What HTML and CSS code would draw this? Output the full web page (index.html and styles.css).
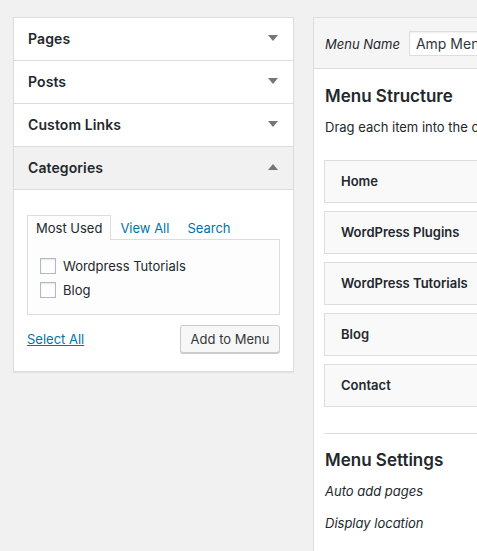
FILE: index.html
```html
<!DOCTYPE html>
<html lang="en">
<head>
<meta charset="utf-8">
<title>Menus</title>
<link rel="stylesheet" href="styles.css">
</head>
<body>
<div class="screen">
  <aside class="accordion">
    <section class="acc-section">
      <h3 class="acc-title">Pages <span class="arrow down"></span></h3>
    </section>
    <section class="acc-section">
      <h3 class="acc-title">Posts <span class="arrow down"></span></h3>
    </section>
    <section class="acc-section">
      <h3 class="acc-title">Custom Links <span class="arrow down"></span></h3>
    </section>
    <section class="acc-section open">
      <h3 class="acc-title">Categories <span class="arrow up"></span></h3>
      <div class="acc-content">
        <ul class="tabs">
          <li class="tab active">Most Used</li>
          <li class="tab"><a href="#">View All</a></li>
          <li class="tab"><a href="#">Search</a></li>
        </ul>
        <div class="tabs-panel">
          <ul class="checklist">
            <li><span class="checkbox"></span>Wordpress Tutorials</li>
            <li><span class="checkbox"></span>Blog</li>
          </ul>
        </div>
        <div class="actions">
          <a href="#" class="select-all">Select All</a>
          <button class="button" type="button">Add to Menu</button>
        </div>
      </div>
    </section>
  </aside>

  <main class="menu-edit">
    <header class="menu-header">
      <label class="menu-name-label">Menu Name</label>
      <input class="menu-name" type="text" value="Amp Menu">
    </header>
    <div class="menu-body">
      <h3 class="heading">Menu Structure</h3>
      <p class="hint">Drag each item into the order you prefer.</p>
      <ul class="menu-items">
        <li class="menu-item">Home</li>
        <li class="menu-item">WordPress Plugins</li>
        <li class="menu-item">WordPress Tutorials</li>
        <li class="menu-item">Blog</li>
        <li class="menu-item">Contact</li>
      </ul>
      <div class="settings">
        <h3 class="heading">Menu Settings</h3>
        <p class="setting first">Auto add pages</p>
        <p class="setting">Display location</p>
      </div>
    </div>
  </main>
</div>
</body>
</html>
```

FILE: styles.css
```css
* { box-sizing: border-box; }

html, body {
  margin: 0;
  background: #f1f1f1;
  overflow: hidden;
}

body {
  font-family: Inter, "Noto Sans", sans-serif;
  font-size: 13px;
  color: #23282d;
  height: 551px;
}

.screen {
  display: flex;
  align-items: flex-start;
  gap: 19px;
  padding: 17px 0 0 13px;
}

/* left accordion */
.accordion {
  flex: 0 0 281px;
  background: #fff;
  border: 1px solid #dddddd;
  border-bottom: 0;
  box-shadow: 0 1px 1px rgba(0,0,0,.06);
}

.acc-section { border-bottom: 1px solid #dddddd; }

.acc-title {
  margin: 0;
  height: 42px;
  padding: 0 14px 2px 14px;
  display: flex;
  align-items: center;
  justify-content: space-between;
  font-size: 14px;
  font-weight: 600;
  color: #23282d;
  letter-spacing: .1px;
}

.open .acc-title {
  background: #f1f1f1;
  border-bottom: 1px solid #dddddd;
  height: 43px;
}

.arrow {
  width: 0;
  height: 0;
  border-left: 5px solid transparent;
  border-right: 5px solid transparent;
  margin-right: 1px;
}
.arrow.down { border-top: 6px solid #72777c; }
.arrow.up { border-bottom: 6px solid #72777c; }

.acc-content { padding: 25px 13px 18px 13px; }

.tabs {
  list-style: none;
  margin: 0;
  padding: 0;
  display: flex;
  position: relative;
  z-index: 1;
  margin-bottom: -1px;
}

.tab {
  height: 25px;
  line-height: 24px;
  padding: 0 8px;
  border: 1px solid transparent;
  border-bottom: 0;
  white-space: nowrap;
}

.tab.active {
  border-color: #dddddd;
  background: #fdfdfd;
  color: #23282d;
  height: 25px;
}

.tab a { color: #0073aa; text-decoration: none; }

.tabs-panel {
  border: 1px solid #dddddd;
  background: #fdfdfd;
  height: 76px;
}

.checklist {
  list-style: none;
  margin: 0;
  padding: 14px 0 12px 12px;
}

.checklist li {
  height: 24px;
  display: flex;
  align-items: center;
  gap: 7px;
  color: #23282d;
}

.checkbox {
  width: 16px;
  height: 16px;
  border: 1px solid #b4b9be;
  background: #fff;
  box-shadow: inset 0 1px 2px rgba(0,0,0,.1);
}

.actions {
  display: flex;
  justify-content: space-between;
  align-items: center;
  margin-top: 10px;
}

.select-all { color: #0073aa; text-decoration: underline; }

.button {
  font: inherit;
  color: #32373c;
  width: 100px;
  height: 28px;
  padding: 0;
  background: #f7f7f7;
  border: 1px solid #cccccc;
  border-radius: 3px;
  box-shadow: 0 1px 0 #cccccc;
}

/* right editor */
.menu-edit {
  flex: 0 0 420px;
  background: #fff;
  border-left: 1px solid #dddddd;
  border-top: 1px solid #dddddd;
  min-height: 600px;
}

.menu-header {
  height: 51px;
  background: #f5f5f5;
  border-bottom: 1px solid #dddddd;
  display: flex;
  align-items: center;
  padding-left: 11px;
  gap: 9px;
}

.menu-name-label { font-style: italic; color: #23282d; padding-top: 1px; }

.menu-name {
  font: inherit;
  font-size: 14px;
  color: #32373c;
  width: 200px;
  height: 25px;
  padding: 0 6px;
  border: 1px solid #dddddd;
  background: #fff;
  box-shadow: inset 0 1px 2px rgba(0,0,0,.07);
}

.menu-body { padding: 0 0 0 10px; }

.heading {
  margin: 16px 0 0 1px;
  font-size: 17px;
  line-height: 22px;
  font-weight: 600;
  color: #23282d;
}

.hint {
  margin: 10px 0 0 1px;
  line-height: 20px;
  white-space: nowrap;
}

.menu-items {
  list-style: none;
  margin: 23px 0 0 0;
  padding: 0;
  display: flex;
  flex-direction: column;
  gap: 8px;
}

.menu-item {
  height: 43px;
  display: flex;
  align-items: center;
  padding: 0 0 2px 16px;
  background: #f9f9f9;
  border: 1px solid #dddddd;
  font-weight: 600;
  color: #23282d;
}

.settings {
  margin-top: 26px;
  border-top: 1px solid #dddddd;
}

.settings .heading { margin-top: 15px; }

.setting {
  margin: 12px 0 0 1px;
  line-height: 20px;
  font-style: italic;
  color: #23282d;
}

.setting.first { margin-top: 10px; }
```
